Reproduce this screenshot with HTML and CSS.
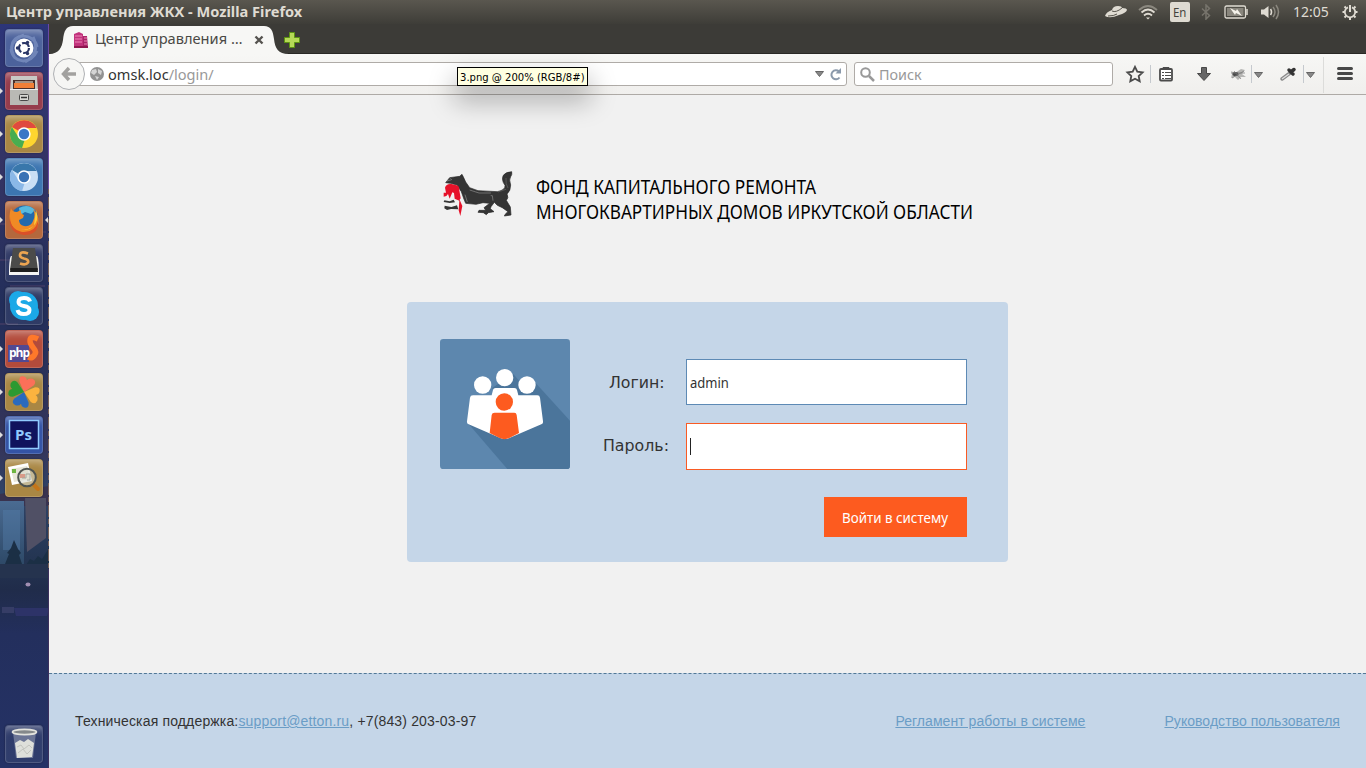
FILE: index.html
```html
<!DOCTYPE html>
<html lang="ru">
<head>
<meta charset="utf-8">
<title>Центр управления ЖКХ</title>
<link rel="stylesheet" href="styles.css">
</head>
<body>
<header class="panel">
  <span class="fit panel-title">Центр управления ЖКХ - Mozilla Firefox</span>
  <div class="tray">
    <svg width="24" height="16" viewBox="0 0 24 16"><path d="M1 12 Q2 8 8 6 Q9 2 14 2 Q18 2 18 4 Q23 4 23 6 Q22 9 15 11 Q6 15 1 12Z" fill="#dfdbd2"/><path d="M8 7q4 2 10-3M4 12q6 0 9-2" stroke="#57544c" fill="none"/></svg>
    <svg class="wifi" width="20" height="16" viewBox="0 0 20 16" fill="none" stroke="#dfdbd2" stroke-width="1.8"><path d="M1 6Q10-2 19 6" stroke="#8b887f"/><path d="M3.5 8.500Q10 2.500 16.500 8.500M6 11.500Q10 8 14 11.500"/><path d="M8 13.500h4l-2 2z" fill="#dfdbd2" stroke="none"/></svg>
    <span class="lang"><span class="lang-text">En</span></span>
    <svg class="bt" width="10" height="16" viewBox="0 0 10 16" fill="none" stroke="#77746c" stroke-width="1.5"><path d="M1 4.500 8.500 11.500 5 15V1l3.500 3.500L1 11.500"/></svg>
    <svg class="bat" width="25" height="14" viewBox="0 0 25 14"><rect x="1" y="1" width="20.500" height="12" rx="1.500" fill="none" stroke="#dfdbd2" stroke-width="1.300"/><rect x="3" y="3" width="16.500" height="8" fill="#89867d"/><path d="M23 4v6" stroke="#dfdbd2" stroke-width="1.500"/><path d="M6 3l6 3 1-2 5 7-6-3-1 2z" fill="#f4f1e9"/></svg>
    <svg class="vol" width="21" height="16" viewBox="0 0 21 16" fill="none"><path d="M1 5.500h3L8.500 2v12L4 10.500H1z" fill="#dfdbd2"/><path d="M10.500 5q2 3 0 6" stroke="#dfdbd2" stroke-width="1.600"/><path d="M13 3q4 5 0 10M16 1q5 7 0 14" stroke="#8b887f" stroke-width="1.500"/></svg>
    <span class="fit clock">12:05</span>
    <svg class="gear" width="18" height="18" viewBox="0 0 18 18" fill="none" stroke="#dfdbd2"><path d="M7 4.300A5.200 5.200 0 1 0 11 4.300" stroke-width="1.800"/><path d="M9 2v7" stroke-width="2"/><path d="M1.500 9H4M14 9h2.500M3.500 3.500 5 5M14.500 3.500 13 5M3.500 14.500 5 13M14.500 14.500 13 13M9 14.500V17" stroke-width="2"/></svg>
  </div>
</header>
<div class="desktop">
<nav class="launcher">
  <svg class="city" width="49" height="744" viewBox="0 0 49 744">
    <defs><linearGradient id="sky" x1="0" y1="0" x2="0" y2="1"><stop offset="0" stop-color="#2c3578"/><stop offset=".2" stop-color="#343464"/><stop offset=".38" stop-color="#222e5a"/><stop offset=".57" stop-color="#35355a"/><stop offset=".63" stop-color="#2f4468"/><stop offset=".72" stop-color="#243552"/><stop offset=".76" stop-color="#202c4a"/><stop offset=".82" stop-color="#232f5d"/><stop offset="1" stop-color="#253266"/></linearGradient><linearGradient id="dusk" x1="0" y1="0" x2="0" y2="1"><stop offset="0" stop-color="#4a6b92"/><stop offset="1" stop-color="#2c4765"/></linearGradient></defs>
    <path fill="url(#sky)" d="M0 0h49v744H0z"/>
    <path d="M0 470l49-8v20H0z" fill="#39334f"/><path d="M0 477h24v67H0z" fill="url(#dusk)"/><path d="M3 486h17v40H3z" fill="#5480ac" opacity=".4"/><path d="M25 474h21v40l-19 14z" fill="#505065"/>
    <path d="M14 516l4 9 3 4-2 2 3 9H5l4-10-2-1 4-5zM26 541l4-6 4 2 4-5 4 3 7-11v20H24z" fill="#1b2f45"/>
    <path d="M0 540h49v14H0z" fill="#25334e"/><path d="M14 584h35l-2 8H16z" fill="#2d3368"/><path d="M2 583h12v6H2z" fill="#363d66"/><ellipse cx="28" cy="560.500" rx="2.500" ry="2" fill="#a18fb2"/>
    <path d="M0 200h13M6 208h40M0 236h20M10 262h35M0 300h18" stroke="#55466c" stroke-width="1.500" opacity=".6"/>
    <path d="M48.500 0v165" stroke="#6a4aa5"/><path d="M48.500 165v380" stroke="#786057" stroke-dasharray="5 3 12 2"/><path d="M48.500 545v199" stroke="#3c305d"/>
  </svg>
  <div class="apps">
    <div class="tile dash"><svg viewBox="0 0 38 38"><path d="M7 18C7 3 30 4 32 18M6 20c2 15 20 16 26 2M10 29Q0 13 19 6M28 8q8 16-8 25" fill="none" stroke="#8ea2cf" stroke-width="3" opacity=".55"/><circle cx="19" cy="19" r="9.500" fill="#fff"/><circle cx="19" cy="19" r="5" fill="none" stroke="#293566" stroke-width="2.200" stroke-dasharray="8.500 2"/><g fill="#293566"><circle cx="12.500" cy="19" r="1.700"/><circle cx="22.500" cy="13.500" r="1.700"/><circle cx="22.500" cy="24.500" r="1.700"/></g></svg></div>
    <div class="tile files run"><svg viewBox="0 0 38 38"><path d="M6 4h26l1 15v14H5V19z" fill="#c9c9c5"/><path d="M8 8h22v9H8z" fill="#4a302b"/><path d="M9 11h20v5H9z" fill="#f27f37"/><path d="M10 10h18" stroke="#fff2da"/><path d="M5 17h28v16H5z" fill="#b9b9b5"/><path d="M5 17.500h28" stroke="#eee"/><rect x="14.500" y="22.500" width="9" height="6" rx="1" fill="#d9d9d5" stroke="#494949"/><path d="M16 25.500h6" stroke="#333" stroke-width="1.500"/></svg></div>
    <div class="tile gold run"><svg viewBox="0 0 38 38"><circle cx="19" cy="19" r="14" fill="#fed52f"/><path d="M19 19 6.900 12A14 14 0 0 1 31.500 13H19z" fill="#e04a3f"/><path d="M6.900 12 14 23 20 24 17 33A14 14 0 0 1 6.900 12" fill="#48ad50"/><circle cx="19" cy="19" r="6.700" fill="#fff"/><circle cx="19" cy="19" r="5.200" fill="#3977c6"/></svg></div>
    <div class="tile blue run"><svg viewBox="0 0 38 38"><circle cx="19" cy="19" r="14" fill="#c9dff5"/><path d="M19 19 6.900 12A14 14 0 0 1 31.500 13H19z" fill="#3977ab"/><path d="M6.900 12 14 23 20 24 17 33A14 14 0 0 1 6.900 12" fill="#8bb8e7"/><circle cx="19" cy="19" r="6.700" fill="#fff"/><circle cx="19" cy="19" r="5.200" fill="#3a73b5"/></svg></div>
    <div class="tile orange run focus"><svg viewBox="0 0 38 38"><circle cx="19.500" cy="18.500" r="14" fill="#236aac"/><path d="M14 7q9-5 16 2l-4 4-6-2-5 3z" fill="#56b9df"/><path d="M6 7q1 4 6 4l4-2q-1 4 3 5l-1 3-4 2q0 5 5 6 7 1 9-5 3-6 0-12Q37 17 32 27 24 36 13 31 1 23 6 7Z" fill="#f08a25"/><path d="M5 16q0 12 12 15Q30 32 33 20q1 14-14 14Q3 32 5 16Z" fill="#db5028"/><path d="M31 9q4 11-4 17-6 4-12 2 9 3 14-4z" fill="#fccf3c"/></svg></div>
    <div class="tile glass"><svg viewBox="0 0 38 38"><path d="M6 12Q4 14 4 31h30q0-17-2-19z" fill="#f4f4f3"/><path d="M8 4h22l3 22H5z" fill="#4b4b4a"/><path d="M5.500 24h27l.5 4H5z" fill="#1e1e1e"/><path d="M23 9.500q-8-3-8 2 0 2 4 3 5 1 4 4-2 3-8 1" fill="none" stroke="#eda551" stroke-width="2.700"/></svg></div>
    <div class="tile glass"><svg viewBox="0 0 38 38"><g fill="#1ba9e7"><circle cx="13" cy="13" r="9"/><circle cx="25" cy="25" r="9"/><circle cx="19" cy="19" r="14"/></g><path d="M25 14.500q-1-3.500-6-3.500-5.500 0-5.500 4 0 3 5.500 4t5.500 4q0 4-6 4-5 0-6-4" fill="none" stroke="#fff" stroke-width="4"/></svg></div>
    <div class="tile phps run"><svg viewBox="0 0 38 38"><path d="M3 15h21v17H3z" fill="#514992"/><path d="M33 9q-8-4-8 2 0 3 3.500 7t1 7q-3 4-6 2" fill="none" stroke="#ff782a" stroke-width="5.500"/><text x="4" y="27" class="php">php</text></svg></div>
    <div class="tile gold run"><svg viewBox="0 0 38 38"><g transform="rotate(14 19 19)"><path d="M19 19 12 10Q10 4 15 4q3 0 4 3 1-3 5-3 5 1 3 6z" fill="#fb7059"/><path d="M19 19 28 12Q34 10 34 15q0 3-3 4 3 1 3 5-1 5-6 3z" fill="#fbb33f"/><path d="M19 19 26 28Q28 34 23 34q-3 0-4-3-1 3-5 3-5-1-3-6z" fill="#2b6abd"/><path d="M19 19 10 26Q4 28 4 23q0-3 3-4-3-1-3-5 1-5 6-3z" fill="#2c9a31"/></g></svg></div>
    <div class="tile ps run"><svg viewBox="0 0 38 38"><path d="M4.500 4.500h29v28h-29z" fill="#10135d" stroke="#91caff" stroke-width="1.500"/><text x="10" y="23.500" class="ps-text">Ps</text></svg></div>
    <div class="tile gold run"><svg viewBox="0 0 38 38"><path d="M3 8 23 4l4 18-20 4z" fill="#fff"/><path d="M6 10l16-3 3 13-16 3z" fill="#e8e6d8"/><path d="M7 10h4v4H7z" fill="#6db641"/><path d="M15 15h5v4h-5z" fill="#d93d23"/><path d="M28 25l5 5" stroke="#c47519" stroke-width="4" stroke-linecap="round"/><circle cx="22" cy="18.500" r="8.800" fill="#d7d9cb" fill-opacity=".6" stroke="#4e5350" stroke-width="2"/><path d="M17 19h4v-4h4v6h-3" stroke="#a3a79e" fill="none"/></svg></div>
    <div class="tile glass trash"><svg viewBox="0 0 38 38"><path d="M8 7h23l-3 26H11z" fill="#dce0e5" opacity=".35"/><path d="M10 18l5-3 4 2 4-3 6 4-2 14-15 1z" fill="#dedfda"/><path d="M12 22l4-2 3 4 5-4 3 3M13 28l5-4 4 5 4-4" stroke="#c2c3be" fill="none"/><ellipse cx="19.500" cy="7" rx="12" ry="2.600" fill="#85898b" stroke="#e3e3dd" stroke-width="1.800"/></svg></div>
  </div>
</nav>
<section class="browser">
  <div class="tabstrip">
    <div class="tab">
      <svg class="tab-shape" width="242" height="28" viewBox="0 0 242 28"><path d="M0 28C10 28 13 21 14 14 15 5 17 0 24 0H215C222 0 224 5 225 13 226 22 229 28 240 28z" fill="#f7f7f5"/></svg>
      <svg class="fav" width="16" height="16" viewBox="0 0 16 16"><path d="M1 2 6 0l4 2v14H1z" fill="#c2337c"/><path d="M10 4h4l1 12h-5z" fill="#a92569"/><path d="M2 4h7M2 7h7M2 10h7M11 6h3M11 9h3M11 12h3" stroke="#ee86b6"/><path d="M1 14h14v2H1z" fill="#8e174f"/></svg>
      <span class="fit tab-text">Центр управления …</span>
      <svg class="close" width="10" height="10" viewBox="0 0 10 10"><path d="M1.500 1.500l7 7M8.500 1.500l-7 7" stroke="#55534f" stroke-width="2.400"/></svg>
    </div>
    <svg class="plus" width="16" height="16" viewBox="0 0 16 16"><path d="M5.500.5h5v5h5v5h-5v5h-5v-5h-5v-5h5z" fill="#b6d957" stroke="#5d9313"/></svg>
  </div>
  <div class="toolbar">
    <div class="urlbar">
      <div class="back"><svg width="16" height="16" viewBox="0 0 16 16"><path d="M8 2 2.500 8 8 14M3 8h12" fill="none" stroke="#a2a19f" stroke-width="3.400"/></svg></div>
      <svg class="globe" width="14" height="14" viewBox="0 0 14 14"><circle cx="7" cy="7" r="7" fill="#929292"/><path d="M2 3l4-1 1 3-3 3-3-2zM8 2l4 2-1 4-3-2zM5 9l4 1-2 3z" fill="#d5d5d5"/></svg>
      <span class="fit url">omsk.loc<span>/login/</span></span>
      <svg class="drop" width="9" height="6" viewBox="0 0 9 6"><path d="M.5.5h8l-4 5z" fill="#888" stroke="#666"/></svg>
      <svg class="reload" width="13" height="13" viewBox="0 0 13 13"><path d="M10 3.500A4.500 4.500 0 1 0 10.500 9.500" fill="none" stroke="#8a99ab" stroke-width="2"/><path d="M6.500 5.500h5.500V0z" fill="#8a99ab"/></svg>
    </div>
    <div class="search">
      <svg width="15" height="15" viewBox="0 0 15 15" fill="none" stroke="#999"><circle cx="5.500" cy="5.500" r="4.300" stroke-width="2"/><path d="M9 9l5 5" stroke-width="2.500"/></svg>
      <span class="fit search-text">Поиск</span>
    </div>
    <svg class="tools" width="253" height="41" viewBox="0 0 253 41">
      <path d="M22 12.800l2.300 4.800 5.300.7-3.900 3.700 1 5.300-4.700-2.600-4.700 2.600 1-5.300-3.900-3.700 5.300-.7z" fill="none" stroke="#4b4b4b" stroke-width="1.800"/>
      <path d="M37.500 11v18M138.500 11v18M190.500 11v18" stroke="#c5c9ce"/>
      <rect x="47" y="15" width="12" height="11.500" rx="1" fill="#fff" stroke="#4b4b4b" stroke-width="1.800"/><path d="M50 15v-1.500h6V15M49 18.500h2M52 18.500h6M49 21.500h2M52 21.500h6M49 24.500h2M52 24.500h6" stroke="#4b4b4b" fill="none"/>
      <path d="M88.500 13.500h5v6h4L91 26.500l-6.500-7h4z" fill="#666" stroke="#484848"/>
      <path d="M118 17l4 2 6-4 4 1-3 4 4 3-5 0-3 3-3-3-4 1 1-4z" fill="#b6b6b4"/><ellipse cx="122.500" cy="20" rx="3" ry="2" fill="#4a4a4a"/><path d="M119 24l12-7M121 17l7 8M118 19h14" stroke="#777" stroke-width=".7"/>
      <path d="M141.500 18.500h8l-4 5z" fill="#888" stroke="#666"/>
      <path d="M169 25l8-6" stroke="#888" stroke-width="3.500" stroke-linecap="round"/><path d="M169 25l7-5" stroke="#ddd" stroke-width="1.500"/><path d="M176 16l4 4M179 17l2-1.500" stroke="#333" stroke-width="3.500" stroke-linecap="round"/>
      <path d="M193.500 18.500h8l-4 5z" fill="#888" stroke="#666"/>
      <path d="M210.500 3v36" stroke="#dcdcda"/><path d="M225.500 14.500h13M225.500 19.500h13M225.500 24.500h13" stroke="#484848" stroke-width="3" stroke-linecap="round"/>
    </svg>
    <div class="tooltip"><span class="fit tip-text">3.png @ 200% (RGB/8#)</span></div>
  </div>
  <main class="page">
    <div class="brand">
      <svg width="70" height="47" viewBox="40 30 210 141">
        <path d="M48 68 60 53 90 49 97 43 103 55 108 66 120 83 145 92 203 95Q228 90 226 76 214 60 221 46 228 36 246 35 248 44 243 50 237 58 243 75 243 93 232 102 238 114 230 121L242 141 244 165 224 168 228 161 235 155 218 143 203 136 194 127 184 140 182 146 193 155 176 158 170 164 161 158 145 157 148 151 168 151 163 143 180 130 160 128 139 133 108 130 103 118 95 95 82 75 62 70Z" fill="#353535" stroke="#272727" stroke-width="2"/>
        <path d="M72 119 60 124 44 121 42 126 60 129 76 127M82 136 65 141 45 137 44 145 52 150 64 147 86 148" fill="#353535"/>
        <path d="M46 83Q50 70 65 72L80 76Q90 78 89 91L93 115 90 119 98 138 92 168 87 151 89 122 75 116 73 99 68 97 60 116 55 102 50 108 42 110 42 98 49 98Z" fill="#e6122a"/>
        <path d="M52 63l14-4-4-4M120 90l28 9 36 0M106 104l7 22M183 107l5 0 2 15" fill="none" stroke="#aaa" stroke-width="1.500"/><path d="M205 96l24-8M229 54q-2 18 6 30" stroke="#666" fill="none" stroke-width="2"/>
      </svg>
      <h1><span class="fit h-one">ФОНД КАПИТАЛЬНОГО РЕМОНТА</span><span class="fit h-two">МНОГОКВАРТИРНЫХ ДОМОВ ИРКУТСКОЙ ОБЛАСТИ</span></h1>
    </div>
    <form class="card">
      <svg class="people" width="130" height="130" viewBox="0 0 390 390">
        <rect width="390" height="390" rx="10" fill="#5d87ae"/>
        <path d="M84 253 287 132 390 245V380Q390 390 380 390H202z" fill="#4b759b"/><path d="M155 148 220 105 250 140 232 190z" fill="#4b759b"/>
        <g fill="#fff"><circle cx="128" cy="138" r="26"/><circle cx="194" cy="116" r="26"/><circle cx="261" cy="138" r="26"/><path d="M99 169h56l4-16q1-6 8-6h56q7 0 8 6l4 16h57q7 0 8 7l9 71q1 6-5 9l-94 40q-15 7-31 0L86 256q-6-3-5-9l9-71q1-7 9-7z"/></g>
        <g fill="#fd5b1f"><circle cx="193" cy="189" r="26"/><path d="M164 221h59q6 0 7 7l7 54-29 15q-15 7-29 0l-30-15 6-54q1-7 9-7z"/></g>
      </svg>
      <div class="fields">
        <label class="row"><span class="label"><span class="fit login-label">Логин:</span></span><span class="input"><span class="fit admin">admin</span></span></label>
        <label class="row"><span class="label"><span class="fit pass-label">Пароль:</span></span><span class="input active"><i class="caret"></i></span></label>
        <div class="submit"><span class="fit submit-text">Войти в систему</span></div>
      </div>
    </form>
    <footer class="footer">
      <p>Техническая поддержка:<a>support@etton.ru</a>, +7(843) 203-03-97</p>
      <div class="links"><a>Регламент работы в системе</a><a>Руководство пользователя</a></div>
    </footer>
  </main>
</section>
</div>
</body>
</html>
```
FILE: styles.css
```css
* { box-sizing: border-box; }
body { margin: 0; width: 1366px; height: 768px; overflow: hidden; display: flex; flex-direction: column; font-family: "Noto Sans", sans-serif; }
svg { display: block; flex: none; }
.fit { display: inline-block; white-space: nowrap; transform-origin: 0 50%; }
.panel { height: 24px; flex: none; display: flex; justify-content: space-between; align-items: center; padding: 0 7px 0 6px; background: linear-gradient(#5a574f, #3e3d38); color: #dfdbd2; }
.panel-title { font-weight: 700; font-size: 14px; line-height: 24px; transform: scaleX(1.042); }
.tray { display: flex; align-items: center; }
.wifi { margin-left: 10px; }
.lang { margin-left: 12px; width: 20px; height: 20px; border-radius: 2px; background: #dfdbd2; color: #45433c; font-size: 13px; line-height: 21px; display: flex; justify-content: center; }
.lang-text { transform: scaleX(.88); }
.bt { margin-left: 11px; }
.bat { margin-left: 13px; }
.vol { margin-left: 11px; }
.clock { margin-left: 12px; width: 36px; font-size: 14px; line-height: 24px; }
.gear { margin-left: 12px; }
.desktop { flex: 1; display: flex; min-height: 0; }
.launcher { width: 49px; flex: none; position: relative; }
.city { position: absolute; left: 0; top: 0; }
.apps { position: relative; height: 744px; padding: 5px 0 5px 5px; display: flex; flex-direction: column; gap: 5px; }
.tile { position: relative; width: 38px; height: 38px; border-radius: 4px; border: 1px solid #ffffff28; box-shadow: 0 0 2px #0006, inset 0 8px 9px -7px #ffffff80; }
.tile svg { width: 38px; height: 38px; margin: -1px; }
.dash { background: #4c629c; }
.files { background: #963c4c; }
.gold { background: #a98744; }
.blue { background: #3c75b1; }
.orange { background: #b4683d; }
.glass { background: #42507860; }
.phps { background: #b34b3b; }
.ps { background: #3453a5; }
.trash { margin-top: auto; }
.run::before { content: ""; position: absolute; left: -6px; top: 15px; border: 3px solid transparent; border-left: 3px solid #ddd; border-right: 0; }
.focus::after { content: ""; position: absolute; left: 39px; top: 15px; border: 3px solid transparent; border-right: 3px solid #ddd; border-left: 0; }
.php { font: 700 12px "Open Sans", sans-serif; fill: #fff; letter-spacing: -1px; }
.ps-text { font: 700 15px "Open Sans", sans-serif; fill: #91caff; }
.browser { flex: 1; display: flex; flex-direction: column; }
.tabstrip { height: 30px; background: #3c3b37; display: flex; align-items: flex-end; border-bottom: 1px solid #292825; }
.tab { position: relative; width: 242px; height: 28px; margin-bottom: -1px; padding-left: 24px; display: flex; align-items: center; color: #4a4945; }
.tab-shape { position: absolute; left: 0; top: 0; }
.fav, .tab-text, .close { position: relative; }
.tab-text { margin-left: 6px; width: 150px; font-size: 14px; line-height: 24px; margin-top: -2px; transform: scaleX(1.045); }
.close { margin-left: 9px; }
.plus { margin: 0 0 5px -7px; }
.toolbar { position: relative; height: 41px; background: linear-gradient(#f7f7f5, #f0efed); border-bottom: 1px solid #aeaaa6; display: flex; align-items: center; }
.urlbar { width: 781px; height: 24px; margin: 0 7px 0 17px; border: 1px solid #afaba7; border-radius: 0 3px 3px 0; background: #fff; display: flex; align-items: center; padding-right: 4px; }
.back { flex: none; width: 32px; height: 32px; margin-left: -14px; border: 1px solid #afb1b4; border-radius: 50%; background: #f6f6f4; display: flex; align-items: center; justify-content: center; }
.globe { margin-left: 5px; }
.url { margin-left: 4px; font-size: 14px; line-height: 22px; padding-top: 1px; color: #333; transform: scaleX(1.04); }
.url span { color: #999; }
.drop { margin-left: auto; margin-right: 5px; }
.search { width: 259px; height: 24px; border: 1px solid #afaba7; border-radius: 3px; background: #fff; display: flex; align-items: center; padding-left: 5px; }
.search-text { margin-left: 4px; font-size: 14px; line-height: 22px; padding-top: 1px; color: #999; transform: scaleX(1.025); }
.tooltip { position: absolute; z-index: 2; left: 408px; top: 13px; width: 131px; height: 19px; border: 1px solid #000; background: #ffffe1; padding-left: 2px; box-shadow: 0 13px 26px 3px #0004; color: #000; display: flex; align-items: center; }
.tip-text { font: 11px/17px "DejaVu Sans", sans-serif; padding-top: 1px; transform: scaleX(.912); }
.page { flex: 1; background: #f1f1f1; display: flex; flex-direction: column; }
.brand { height: 207px; padding: 75px 0 0 394px; display: flex; gap: 23px; align-items: flex-start; }
.brand h1 { margin: 4px 0 0; font-size: 19.5px; font-weight: 400; line-height: 25px; color: #000; display: flex; flex-direction: column; align-items: flex-start; }
.h-one { transform: scaleX(.886); }
.h-two { transform: scaleX(.882); }
.card { width: 601px; height: 260px; margin-left: 358px; border-radius: 4px; background: #c5d6e8; display: flex; padding: 37px 0 0 33px; color: #333; }
.fields { width: 397px; padding-top: 20px; display: flex; flex-direction: column; }
.row { display: flex; justify-content: space-between; padding-left: 39px; margin-bottom: 18px; }
.row + .row { padding-left: 33px; margin-bottom: 27px; }
.label { height: 46px; font: 16px/46px "DejaVu Sans", sans-serif; }
.login-label { padding-top: 1px; transform: scaleX(.985); }
.pass-label { transform: scaleX(.987); }
.input { width: 281px; height: 46px; border: 1px solid #5d8ab5; background: #fff; display: flex; align-items: center; padding-left: 3px; }
.active { height: 47px; border-color: #f95b24; }
.caret { width: 1px; height: 17px; background: #222; }
.admin { font-size: 14px; transform: scaleX(.93); }
.submit { align-self: flex-end; width: 143px; height: 40px; background: #fd5b1f; color: #fff; padding-left: 18px; }
.submit-text { font-size: 14px; line-height: 41px; transform: scaleX(.955); }
.footer { height: 95px; margin-top: auto; border-top: 1px dashed #527896; background: #c5d6e8; display: flex; justify-content: space-between; align-items: center; padding: 0 26px; font: 14px/20px "Liberation Sans", Arial, sans-serif; color: #333; }
.footer p { margin: 0; letter-spacing: .155px; }
.footer a { color: #6b9dc6; text-decoration: underline; }
.links { display: flex; gap: 79px; letter-spacing: .05px; }
```
